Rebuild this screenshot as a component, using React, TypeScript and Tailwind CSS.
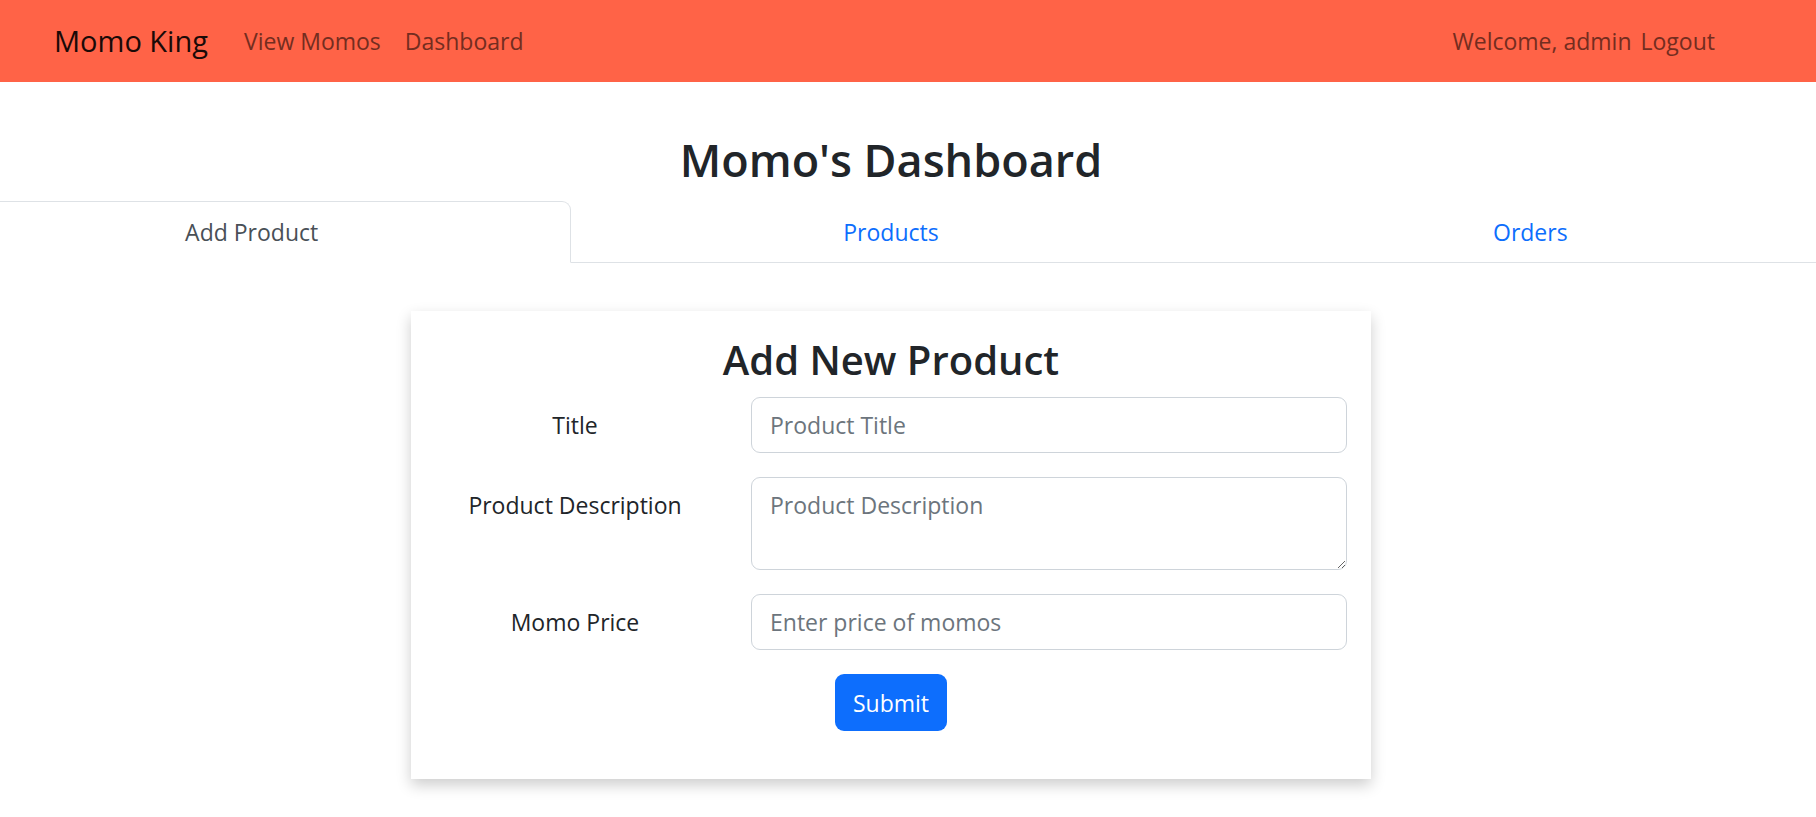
import React from 'react'

// Bootstrap-ish admin page, rendered at the reference's 150% scale

const tabs = [
  { label: 'Add Product', active: true },
  { label: 'Products', active: false },
  { label: 'Orders', active: false },
]

const inputClass =
  'w-full rounded-[9px] border border-[#ced4da] bg-white px-[18px] py-[9px] text-[23px] leading-[36px] text-[#212529] outline-none placeholder:text-[#6c757d]'

const Navbar = () => (
  <nav className="flex h-[82px] items-center bg-[#ff6347] pl-[54px] pr-[101px]">
    <a className="mr-[24px] text-[29px] leading-[40px] text-[#1a0a07]">Momo King</a>
    <div className="flex items-center">
      <a className="px-[12px] text-[23px] leading-[36px] text-[#732d20]">View Momos</a>
      <a className="px-[12px] text-[23px] leading-[36px] text-[#732d20]">Dashboard</a>
    </div>
    <div className="ml-auto flex items-center gap-[9px] text-[23px] leading-[36px] text-[#732d20]">
      <span>Welcome, admin</span>
      <a>Logout</a>
    </div>
  </nav>
)

const FormRow = ({ label, children }: { label: string; children: React.ReactNode }) => (
  <div className="mb-[24px] grid grid-cols-[280px_1fr] gap-x-[36px]">
    <label className="pt-[10px] text-center text-[23px] leading-[36px] text-[#212529]">{label}</label>
    <div>{children}</div>
  </div>
)

export default function App() {
  return (
    <div className="min-h-screen w-full overflow-hidden bg-white font-['Open_Sans','Noto_Sans',sans-serif] text-[#212529]">
      <Navbar />

      <div className="ml-[-68px] w-[1918px]">
        <h2 className="mb-[12px] pt-[49px] text-center text-[45px] leading-[58px] font-semibold text-[#212529]">
          Momo's Dashboard
        </h2>

        {/* tabs */}
        <ul className="flex border-b border-[#dee2e6]">
          {tabs.map((t) => (
            <li key={t.label} className="-mb-px flex-1">
              <a
                className={
                  t.active
                    ? 'block rounded-t-[9px] border border-[#dee2e6] border-b-white bg-white py-[12px] text-center text-[23px] leading-[36px] text-[#495057]'
                    : 'block border border-transparent py-[12px] text-center text-[23px] leading-[36px] text-[#0d6efd]'
                }
              >
                {t.label}
              </a>
            </li>
          ))}
        </ul>

        {/* card */}
        <div className="mx-auto mt-[48px] w-[960px] bg-white p-[24px] shadow-[0_6px_14px_rgba(0,0,0,0.2)]">
          <h3 className="mb-[12px] text-center text-[40px] leading-[50px] font-semibold text-[#212529]">
            Add New Product
          </h3>

          <FormRow label="Title">
            <input className={inputClass} placeholder="Product Title" />
          </FormRow>
          <FormRow label="Product Description">
            <textarea rows={2} className={inputClass + ' block h-[93px]'} placeholder="Product Description" />
          </FormRow>
          <FormRow label="Momo Price">
            <input className={inputClass} placeholder="Enter price of momos" />
          </FormRow>

          <div className="mb-[24px] flex justify-center">
            <button className="h-[57px] rounded-[9px] bg-[#0d6efd] px-[18px] text-[23px] leading-[36px] text-white">
              Submit
            </button>
          </div>
        </div>
      </div>
    </div>
  )
}
